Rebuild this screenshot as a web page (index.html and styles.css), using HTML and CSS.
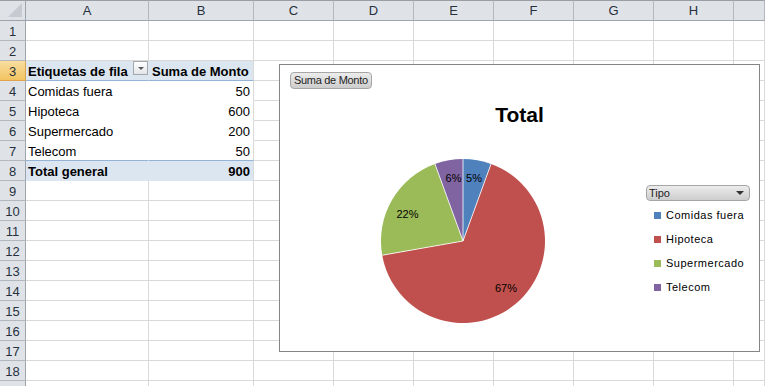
FILE: index.html
```html
<!DOCTYPE html>
<html lang="es">
<head>
  <meta charset="UTF-8">
  <title>Tabla dinámica - Suma de Monto</title>
  <link rel="stylesheet" href="styles.css">
</head>
<body>
  <div class="sheet">
    <!-- Encabezados de columna -->
    <div class="ch corner"></div>
    <div class="ch">A</div><div class="ch">B</div><div class="ch">C</div><div class="ch">D</div><div class="ch">E</div>
    <div class="ch">F</div><div class="ch">G</div><div class="ch">H</div><div class="ch"></div>

    <div class="rh">1</div><div class="c"></div><div class="c"></div><div class="c"></div><div class="c"></div><div class="c"></div><div class="c"></div><div class="c"></div><div class="c"></div><div class="c"></div>
    <div class="rh">2</div><div class="c"></div><div class="c"></div><div class="c"></div><div class="c"></div><div class="c"></div><div class="c"></div><div class="c"></div><div class="c"></div><div class="c"></div>

    <!-- Tabla dinámica -->
    <div class="rh sel">3</div>
    <div class="c pv-head col-a">
      <span>Etiquetas de fila</span>
      <span class="filter"></span>
    </div>
    <div class="c pv-head">Suma de Monto</div>
    <div class="c"></div><div class="c"></div><div class="c"></div><div class="c"></div><div class="c"></div><div class="c"></div><div class="c"></div>

    <div class="rh">4</div><div class="c pv-row col-a">Comidas fuera</div><div class="c pv-row num">50</div>
    <div class="c"></div><div class="c"></div><div class="c"></div><div class="c"></div><div class="c"></div><div class="c"></div><div class="c"></div>
    <div class="rh">5</div><div class="c pv-row col-a">Hipoteca</div><div class="c pv-row num">600</div>
    <div class="c"></div><div class="c"></div><div class="c"></div><div class="c"></div><div class="c"></div><div class="c"></div><div class="c"></div>
    <div class="rh">6</div><div class="c pv-row col-a">Supermercado</div><div class="c pv-row num">200</div>
    <div class="c"></div><div class="c"></div><div class="c"></div><div class="c"></div><div class="c"></div><div class="c"></div><div class="c"></div>
    <div class="rh">7</div><div class="c pv-row pv-last col-a">Telecom</div><div class="c pv-row pv-last num">50</div>
    <div class="c"></div><div class="c"></div><div class="c"></div><div class="c"></div><div class="c"></div><div class="c"></div><div class="c"></div>
    <div class="rh">8</div><div class="c pv-total col-a">Total general</div><div class="c pv-total num">900</div>
    <div class="c"></div><div class="c"></div><div class="c"></div><div class="c"></div><div class="c"></div><div class="c"></div><div class="c"></div>

    <div class="rh">9</div><div class="c"></div><div class="c"></div><div class="c"></div><div class="c"></div><div class="c"></div><div class="c"></div><div class="c"></div><div class="c"></div><div class="c"></div>
    <div class="rh">10</div><div class="c"></div><div class="c"></div><div class="c"></div><div class="c"></div><div class="c"></div><div class="c"></div><div class="c"></div><div class="c"></div><div class="c"></div>
    <div class="rh">11</div><div class="c"></div><div class="c"></div><div class="c"></div><div class="c"></div><div class="c"></div><div class="c"></div><div class="c"></div><div class="c"></div><div class="c"></div>
    <div class="rh">12</div><div class="c"></div><div class="c"></div><div class="c"></div><div class="c"></div><div class="c"></div><div class="c"></div><div class="c"></div><div class="c"></div><div class="c"></div>
    <div class="rh">13</div><div class="c"></div><div class="c"></div><div class="c"></div><div class="c"></div><div class="c"></div><div class="c"></div><div class="c"></div><div class="c"></div><div class="c"></div>
    <div class="rh">14</div><div class="c"></div><div class="c"></div><div class="c"></div><div class="c"></div><div class="c"></div><div class="c"></div><div class="c"></div><div class="c"></div><div class="c"></div>
    <div class="rh">15</div><div class="c"></div><div class="c"></div><div class="c"></div><div class="c"></div><div class="c"></div><div class="c"></div><div class="c"></div><div class="c"></div><div class="c"></div>
    <div class="rh">16</div><div class="c"></div><div class="c"></div><div class="c"></div><div class="c"></div><div class="c"></div><div class="c"></div><div class="c"></div><div class="c"></div><div class="c"></div>
    <div class="rh">17</div><div class="c"></div><div class="c"></div><div class="c"></div><div class="c"></div><div class="c"></div><div class="c"></div><div class="c"></div><div class="c"></div><div class="c"></div>
    <div class="rh">18</div><div class="c"></div><div class="c"></div><div class="c"></div><div class="c"></div><div class="c"></div><div class="c"></div><div class="c"></div><div class="c"></div><div class="c"></div>
    <div class="rh"></div><div class="c"></div><div class="c"></div><div class="c"></div><div class="c"></div><div class="c"></div><div class="c"></div><div class="c"></div><div class="c"></div><div class="c"></div>

    <!-- Gráfico dinámico (flota sobre las celdas) -->
    <div class="chart">
      <div class="field-row"><span class="field-btn">Suma de Monto</span></div>
      <div class="chart-title">Total</div>
      <div class="plot">
        <svg class="pie" width="164" height="164" viewBox="0 0 164 164">
          <path d="M82 82 L82 0 A82 82 0 0 1 110.05 4.94 Z" fill="#4f81bd"/>
          <path d="M82 82 L110.05 4.94 A82 82 0 1 1 1.24 96.24 Z" fill="#c0504d"/>
          <path d="M82 82 L1.24 96.24 A82 82 0 0 1 53.95 4.94 Z" fill="#9bbb59"/>
          <path d="M82 82 L53.95 4.94 A82 82 0 0 1 82 0 Z" fill="#8064a2"/>
          <g class="pie-lines">
            <line x1="82" y1="82" x2="82" y2="0"/>
            <line x1="82" y1="82" x2="110.05" y2="4.94"/>
            <line x1="82" y1="82" x2="1.24" y2="96.24"/>
            <line x1="82" y1="82" x2="53.95" y2="4.94"/>
          </g>
          <text x="72.5" y="23">6%</text>
          <text x="93" y="23">5%</text>
          <text x="26.5" y="59">22%</text>
          <text x="125" y="133">67%</text>
        </svg>
        <div class="legend">
          <div class="legend-btn"><span>Tipo</span><span class="caret"></span></div>
          <ul class="legend-list">
            <li><span class="swatch blue"></span>Comidas fuera</li>
            <li><span class="swatch red"></span>Hipoteca</li>
            <li><span class="swatch green"></span>Supermercado</li>
            <li><span class="swatch purple"></span>Telecom</li>
          </ul>
        </div>
      </div>
    </div>
  </div>
</body>
</html>
```

FILE: styles.css
```css
* {
  box-sizing: border-box;
}

body {
  margin: 0;
  background: #fff;
  overflow: hidden;
}

/* Hoja de cálculo */
.sheet {
  position: relative;
  display: grid;
  grid-template-columns: 26px 123px 105px repeat(6, 80px) 31px;
  grid-template-rows: 21px;
  grid-auto-rows: 20px;
  width: 765px;
  height: 386px;
  overflow: hidden;
  font-family: "Liberation Sans", Arial, sans-serif;
  font-size: 13px;
  color: #000;
}

/* Encabezados */
.ch {
  background: #dfe3e8;
  border-top: 1px solid #9b9fa5;
  border-right: 1px solid #b3b8bf;
  border-bottom: 1px solid #9ea4ab;
  text-align: center;
  padding-top: 1px;
  line-height: 18px;
  color: #27313d;
}
.corner {
  position: relative;
  border-right-color: #9ea4ab;
}
.corner::after {
  content: "";
  position: absolute;
  right: 3px;
  bottom: 3px;
  border-left: 14px solid transparent;
  border-bottom: 14px solid #c7cbd1;
}
.rh {
  background: #dfe3e8;
  border-right: 1px solid #9ea4ab;
  border-bottom: 1px solid #b3b8bf;
  text-align: center;
  padding-top: 2px;
  line-height: 18px;
  color: #27313d;
}
.rh.sel {
  background: linear-gradient(#f9dd9f, #f2c462);
  border-bottom-color: #dfa44c;
  border-right-color: #d9a24d;
}

/* Celdas */
.c {
  border-right: 1px solid #d9d9d9;
  border-bottom: 1px solid #d9d9d9;
  padding: 2px 3px 0 3px;
  line-height: 18px;
  white-space: nowrap;
}
.num {
  text-align: right;
}

/* Tabla dinámica */
.col-a {
  padding-left: 2px;
  border-right-color: transparent;
}
.pv-head {
  background: #dce6f1;
  border-bottom-color: #95b3d7;
  font-weight: bold;
}
.pv-head.col-a {
  display: flex;
  align-items: flex-start;
  padding-right: 0;
}
.filter {
  margin-left: auto;
  margin-top: -2px;
  width: 15px;
  height: 14px;
  border: 1px solid #a5a9ae;
  background: linear-gradient(#ffffff, #e3e5e8);
  display: flex;
  align-items: center;
  justify-content: center;
}
.filter::after {
  content: "";
  border-left: 3px solid transparent;
  border-right: 3px solid transparent;
  border-top: 3px solid #5a5a5a;
}
.pv-row {
  border-bottom-color: #fff;
}
.pv-last {
  border-bottom-color: #95b3d7;
}
.pv-total {
  background: #dce6f1;
  border-bottom-color: #dce6f1;
  font-weight: bold;
}

/* Gráfico */
.chart {
  position: absolute;
  left: 279px;
  top: 64px;
  width: 481px;
  height: 288px;
  border: 1px solid #858585;
  background: #fff;
  font-size: 11px;
}
.field-row {
  height: 24px;
  padding: 7px 0 0 10px;
}
.field-btn {
  display: inline-block;
  height: 17px;
  padding: 0 3px;
  border: 1px solid #a6a6a6;
  border-radius: 4px;
  background: linear-gradient(#ececec, #cdcdcd);
  line-height: 15px;
  letter-spacing: -0.3px;
  color: #222;
}
.chart-title {
  margin-top: 14px;
  text-align: center;
  font-weight: bold;
  font-size: 21px;
  line-height: 24px;
}
.plot {
  display: flex;
  align-items: flex-start;
  margin-top: 32px;
  padding-left: 101px;
}
.pie {
  display: block;
  flex: none;
}
.pie-lines line {
  stroke: #fff;
  stroke-width: 0.8;
}
.pie text {
  font-family: "Liberation Sans", Arial, sans-serif;
  font-size: 11px;
  text-anchor: middle;
  fill: #000;
}

/* Leyenda */
.legend {
  margin-left: 101px;
  margin-top: 26px;
}
.legend-btn {
  width: 104px;
  height: 16px;
  padding: 0 5px 0 2px;
  border: 1px solid #a6a6a6;
  border-radius: 4px;
  background: linear-gradient(#ececec, #cdcdcd);
  display: flex;
  align-items: center;
  justify-content: space-between;
  line-height: 14px;
  color: #222;
}
.caret {
  border-left: 4px solid transparent;
  border-right: 4px solid transparent;
  border-top: 4px solid #333;
}
.legend-list {
  list-style: none;
  margin: 2px 0 0 0;
  padding: 0;
}
.legend-list li {
  display: flex;
  align-items: center;
  gap: 5px;
  height: 24px;
  padding-left: 8px;
  letter-spacing: 0.5px;
  white-space: nowrap;
}
.swatch {
  width: 7px;
  height: 7px;
}
.swatch.blue { background: #4f81bd; }
.swatch.red { background: #c0504d; }
.swatch.green { background: #9bbb59; }
.swatch.purple { background: #8064a2; }
```
